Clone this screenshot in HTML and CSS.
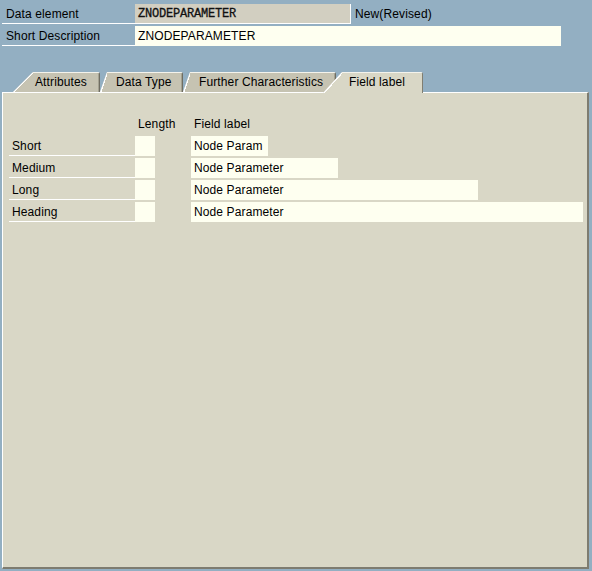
FILE: index.html
```html
<!DOCTYPE html>
<html>
<head>
<meta charset="utf-8">
<link rel="stylesheet" href="styles.css">
</head>
<body>
<div class="header">
  <div class="hrow">
    <div class="hlabel">Data element</div>
    <div class="hfield hfield-ro">ZNODEPARAMETER</div>
    <div class="status">New(Revised)</div>
  </div>
  <div class="hrow">
    <div class="hlabel">Short Description</div>
    <div class="hfield hfield-edit">ZNODEPARAMETER</div>
  </div>
</div>

<div class="tabs">
  <div class="tab tab-first">Attributes</div>
  <div class="tab tab-dt">Data Type</div>
  <div class="tab tab-fc">Further Characteristics</div>
  <div class="tab tab-active">Field label</div>
</div>

<div class="panel">
  <div class="grid">
    <div class="gh"></div>
    <div class="gh gh-len">Length</div>
    <div class="gh"></div>
    <div class="gh gh-fl">Field label</div>

    <div class="glabel">Short</div>
    <div class="glen"></div>
    <div></div>
    <div class="gfield"><span class="fbox fbox-short">Node Param</span></div>

    <div class="glabel">Medium</div>
    <div class="glen"></div>
    <div></div>
    <div class="gfield"><span class="fbox fbox-medium">Node Parameter</span></div>

    <div class="glabel">Long</div>
    <div class="glen"></div>
    <div></div>
    <div class="gfield"><span class="fbox fbox-long">Node Parameter</span></div>

    <div class="glabel">Heading</div>
    <div class="glen"></div>
    <div></div>
    <div class="gfield"><span class="fbox fbox-heading">Node Parameter</span></div>
  </div>
</div>
</body>
</html>
```

FILE: styles.css
```css
html, body {
  margin: 0;
  padding: 0;
}
body {
  background: #93afc2;
  font-family: "Liberation Sans", Arial, sans-serif;
  font-size: 12px;
  letter-spacing: 0.12px;
  color: #000;
  width: 592px;
  height: 571px;
  overflow: hidden;
}

.header {
  padding-top: 4px;
}
.hrow {
  display: flex;
  height: 20px;
  margin-bottom: 2px;
}
.hlabel {
  box-sizing: border-box;
  margin-left: 2px;
  width: 133px;
  padding-left: 4px;
  padding-top: 1px;
  border-bottom: 1px solid #fff;
  line-height: 18px;
}
.hfield {
  box-sizing: border-box;
  padding-left: 3px;
  padding-top: 1px;
  line-height: 18px;
  white-space: nowrap;
}
.hfield-ro {
  width: 216px;
  background: #d2cfc1;
  border-right: 1px solid #fff;
  border-bottom: 1px solid #fff;
  font-family: "Liberation Mono", "Courier New", monospace;
  font-size: 12px;
  font-weight: normal;
  letter-spacing: -0.2px;
  color: #111;
  -webkit-text-stroke: 0.3px #111;
}
.hfield-edit {
  width: 426px;
  background: #fefff0;
  line-height: 19px;
}
.status {
  margin-left: 4px;
  padding-top: 1px;
  line-height: 18px;
}

.tabs {
  display: flex;
  margin-top: 26px;
  padding-left: 13px;
  height: 20px;
}
.tab {
  --s: 7px;
  position: relative;
  box-sizing: border-box;
  height: 20px;
  line-height: 19px;
  white-space: nowrap;
  background-color: #c6c3b2;
  background-image: linear-gradient(to bottom right, #fff 0, #fff calc(50% + 1.3px), transparent calc(50% + 1.3px));
  background-size: var(--s) 100%;
  background-repeat: no-repeat;
  background-origin: border-box;
  border-top: 1px solid #f4f3ec;
  border-right: 1px solid #6f6d62;
  box-shadow: inset -1px 0 0 #a4a292;
  border-top-right-radius: 2px;
  clip-path: polygon(var(--s) 0, 100% 0, 100% 100%, 0 100%);
}
.tab-first {
  --s: 20px;
  width: 87px;
  padding-left: 22px;
}
.tab-dt {
  width: 83px;
  padding-left: 16px;
}
.tab-fc {
  width: 153px;
  padding-left: 16px;
}
.tab-active {
  --s: 19px;
  z-index: 1;
  width: 100px;
  height: 21px;
  margin-left: -13px;
  padding-left: 26px;
  background-color: #d9d7c6;
  box-shadow: none;
  border-right: 1px solid #807e71;
}

.panel {
  box-sizing: border-box;
  margin-left: 2px;
  width: 587px;
  height: 477px;
  background: #d9d7c6;
  border-top: 1px solid #fff;
  border-left: 1px solid #fff;
  border-right: 2px solid #7e7c70;
  border-bottom: 2px solid #7e7c70;
  padding-top: 21px;
  padding-left: 6px;
}

.grid {
  display: grid;
  grid-template-columns: 126px 20px 36px 1fr;
  grid-auto-rows: 20px;
  row-gap: 2px;
}
.gh {
  padding-top: 1px;
  line-height: 19px;
  white-space: nowrap;
}
.gh-len {
  padding-left: 3px;
}
.gh-fl {
  padding-left: 3px;
}
.glabel {
  box-sizing: border-box;
  padding-left: 3px;
  padding-top: 1px;
  border-bottom: 1px solid #fff;
  line-height: 18px;
}
.glen {
  background: #fefff0;
}
.gfield {
  display: flex;
}
.fbox {
  box-sizing: border-box;
  display: block;
  height: 20px;
  padding-top: 1px;
  line-height: 19px;
  padding-left: 3px;
  background: #fefff0;
  white-space: nowrap;
}
.fbox-short { width: 77px; }
.fbox-medium { width: 147px; }
.fbox-long { width: 287px; }
.fbox-heading { width: 392px; }
```
